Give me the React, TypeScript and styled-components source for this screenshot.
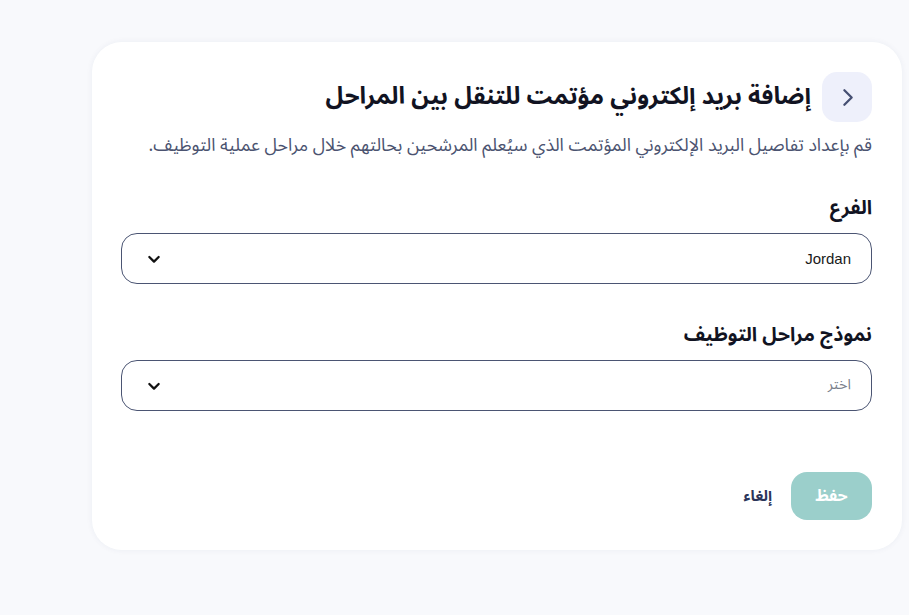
import React from "react";
import styled, { createGlobalStyle } from "styled-components";

const GlobalStyle = createGlobalStyle`
  html, body {
    margin: 0;
    padding: 0;
    background: #f8f9fc;
  }
  body {
    font-family: "Noto Sans Arabic", "DejaVu Sans", "Noto Sans", sans-serif;
    line-height: 1.4;
  }
  * { box-sizing: border-box; }
`;

const Page = styled.div`
  min-height: 615px;
  direction: rtl;
  display: flex;
  align-items: flex-start;
  padding: 42px 7px 0 92px;
`;

const Card = styled.section`
  flex: 1;
  background: #ffffff;
  border-radius: 30px;
  box-shadow: 0 0 6px rgba(40, 50, 100, 0.06);
  padding: 30px 30px 30px 29px;
  display: flex;
  flex-direction: column;
`;

const Header = styled.div`
  display: flex;
  align-items: center;
  gap: 11px;
`;

const BackButton = styled.button`
  width: 50px;
  height: 50px;
  border: 0;
  border-radius: 15px;
  background: #eef0fb;
  color: #454f72;
  display: flex;
  align-items: center;
  justify-content: center;
  padding: 0;
  cursor: pointer;
`;

const Title = styled.h1`
  margin: 0;
  font-size: 24px;
  line-height: 1.4;
  font-weight: 700;
  color: #111322;
`;

const Subtitle = styled.p`
  margin: 11px 0 0;
  font-size: 17.8px;
  line-height: 25px;
  color: #4b5370;
`;

const Field = styled.div<{ $top: number }>`
  margin-top: ${({ $top }) => $top}px;
  display: flex;
  flex-direction: column;
  gap: 12px;
`;

const Label = styled.label`
  font-size: 19.5px;
  line-height: 27px;
  font-weight: 700;
  color: #111322;
`;

const SelectBox = styled.div`
  height: 51px;
  border: 1px solid #4b5573;
  border-radius: 16px;
  display: flex;
  align-items: center;
  justify-content: space-between;
  padding: 0 20px 0 24px;
`;

const Value = styled.span<{ $placeholder?: boolean }>`
  font-family: ${({ $placeholder }) =>
    $placeholder ? `"Noto Sans Arabic", "DejaVu Sans", sans-serif` : `"Liberation Sans", Arial, sans-serif`};
  font-size: ${({ $placeholder }) => ($placeholder ? "14.5px" : "15px")};
  color: ${({ $placeholder }) => ($placeholder ? "#7a7f8c" : "#1a1a1a")};
`;

const Actions = styled.div`
  margin-top: 61px;
  display: flex;
  align-items: center;
  gap: 19px;
`;

const SaveButton = styled.button`
  width: 81px;
  height: 48px;
  border: 0;
  border-radius: 16px;
  background: #9bcfcb;
  color: #ffffff;
  font-family: inherit;
  font-size: 16px;
  font-weight: 700;
  cursor: pointer;
`;

const CancelButton = styled.button`
  border: 0;
  background: none;
  padding: 0;
  color: #2c355a;
  font-family: inherit;
  font-size: 15px;
  font-weight: 700;
  cursor: pointer;
`;

const Chevron = ({ dir }: { dir: "down" | "right" }) =>
  dir === "down" ? (
    <svg width="16" height="16" viewBox="0 0 24 24" fill="none" stroke="#111" strokeWidth="3.4" strokeLinecap="round" strokeLinejoin="round">
      <path d="M5 9l7 7 7-7" />
    </svg>
  ) : (
    <svg width="25" height="25" viewBox="0 0 24 24" fill="none" stroke="currentColor" strokeWidth="2.2" strokeLinecap="round" strokeLinejoin="round">
      <path d="M9 5l7 7-7 7" />
    </svg>
  );

export default function App() {
  return (
    <>
      <GlobalStyle />
      <Page>
        <Card>
          <Header>
            <BackButton aria-label="رجوع">
              <Chevron dir="right" />
            </BackButton>
            <Title>إضافة بريد إلكتروني مؤتمت للتنقل بين المراحل</Title>
          </Header>
          <Subtitle>قم بإعداد تفاصيل البريد الإلكتروني المؤتمت الذي سيُعلم المرشحين بحالتهم خلال مراحل عملية التوظيف.</Subtitle>

          <Field $top={36}>
            <Label>الفرع</Label>
            <SelectBox>
              <Value>Jordan</Value>
              <Chevron dir="down" />
            </SelectBox>
          </Field>

          <Field $top={37}>
            <Label>نموذج مراحل التوظيف</Label>
            <SelectBox>
              <Value $placeholder>اختر</Value>
              <Chevron dir="down" />
            </SelectBox>
          </Field>

          <Actions>
            <SaveButton>حفظ</SaveButton>
            <CancelButton>إلغاء</CancelButton>
          </Actions>
        </Card>
      </Page>
    </>
  );
}
